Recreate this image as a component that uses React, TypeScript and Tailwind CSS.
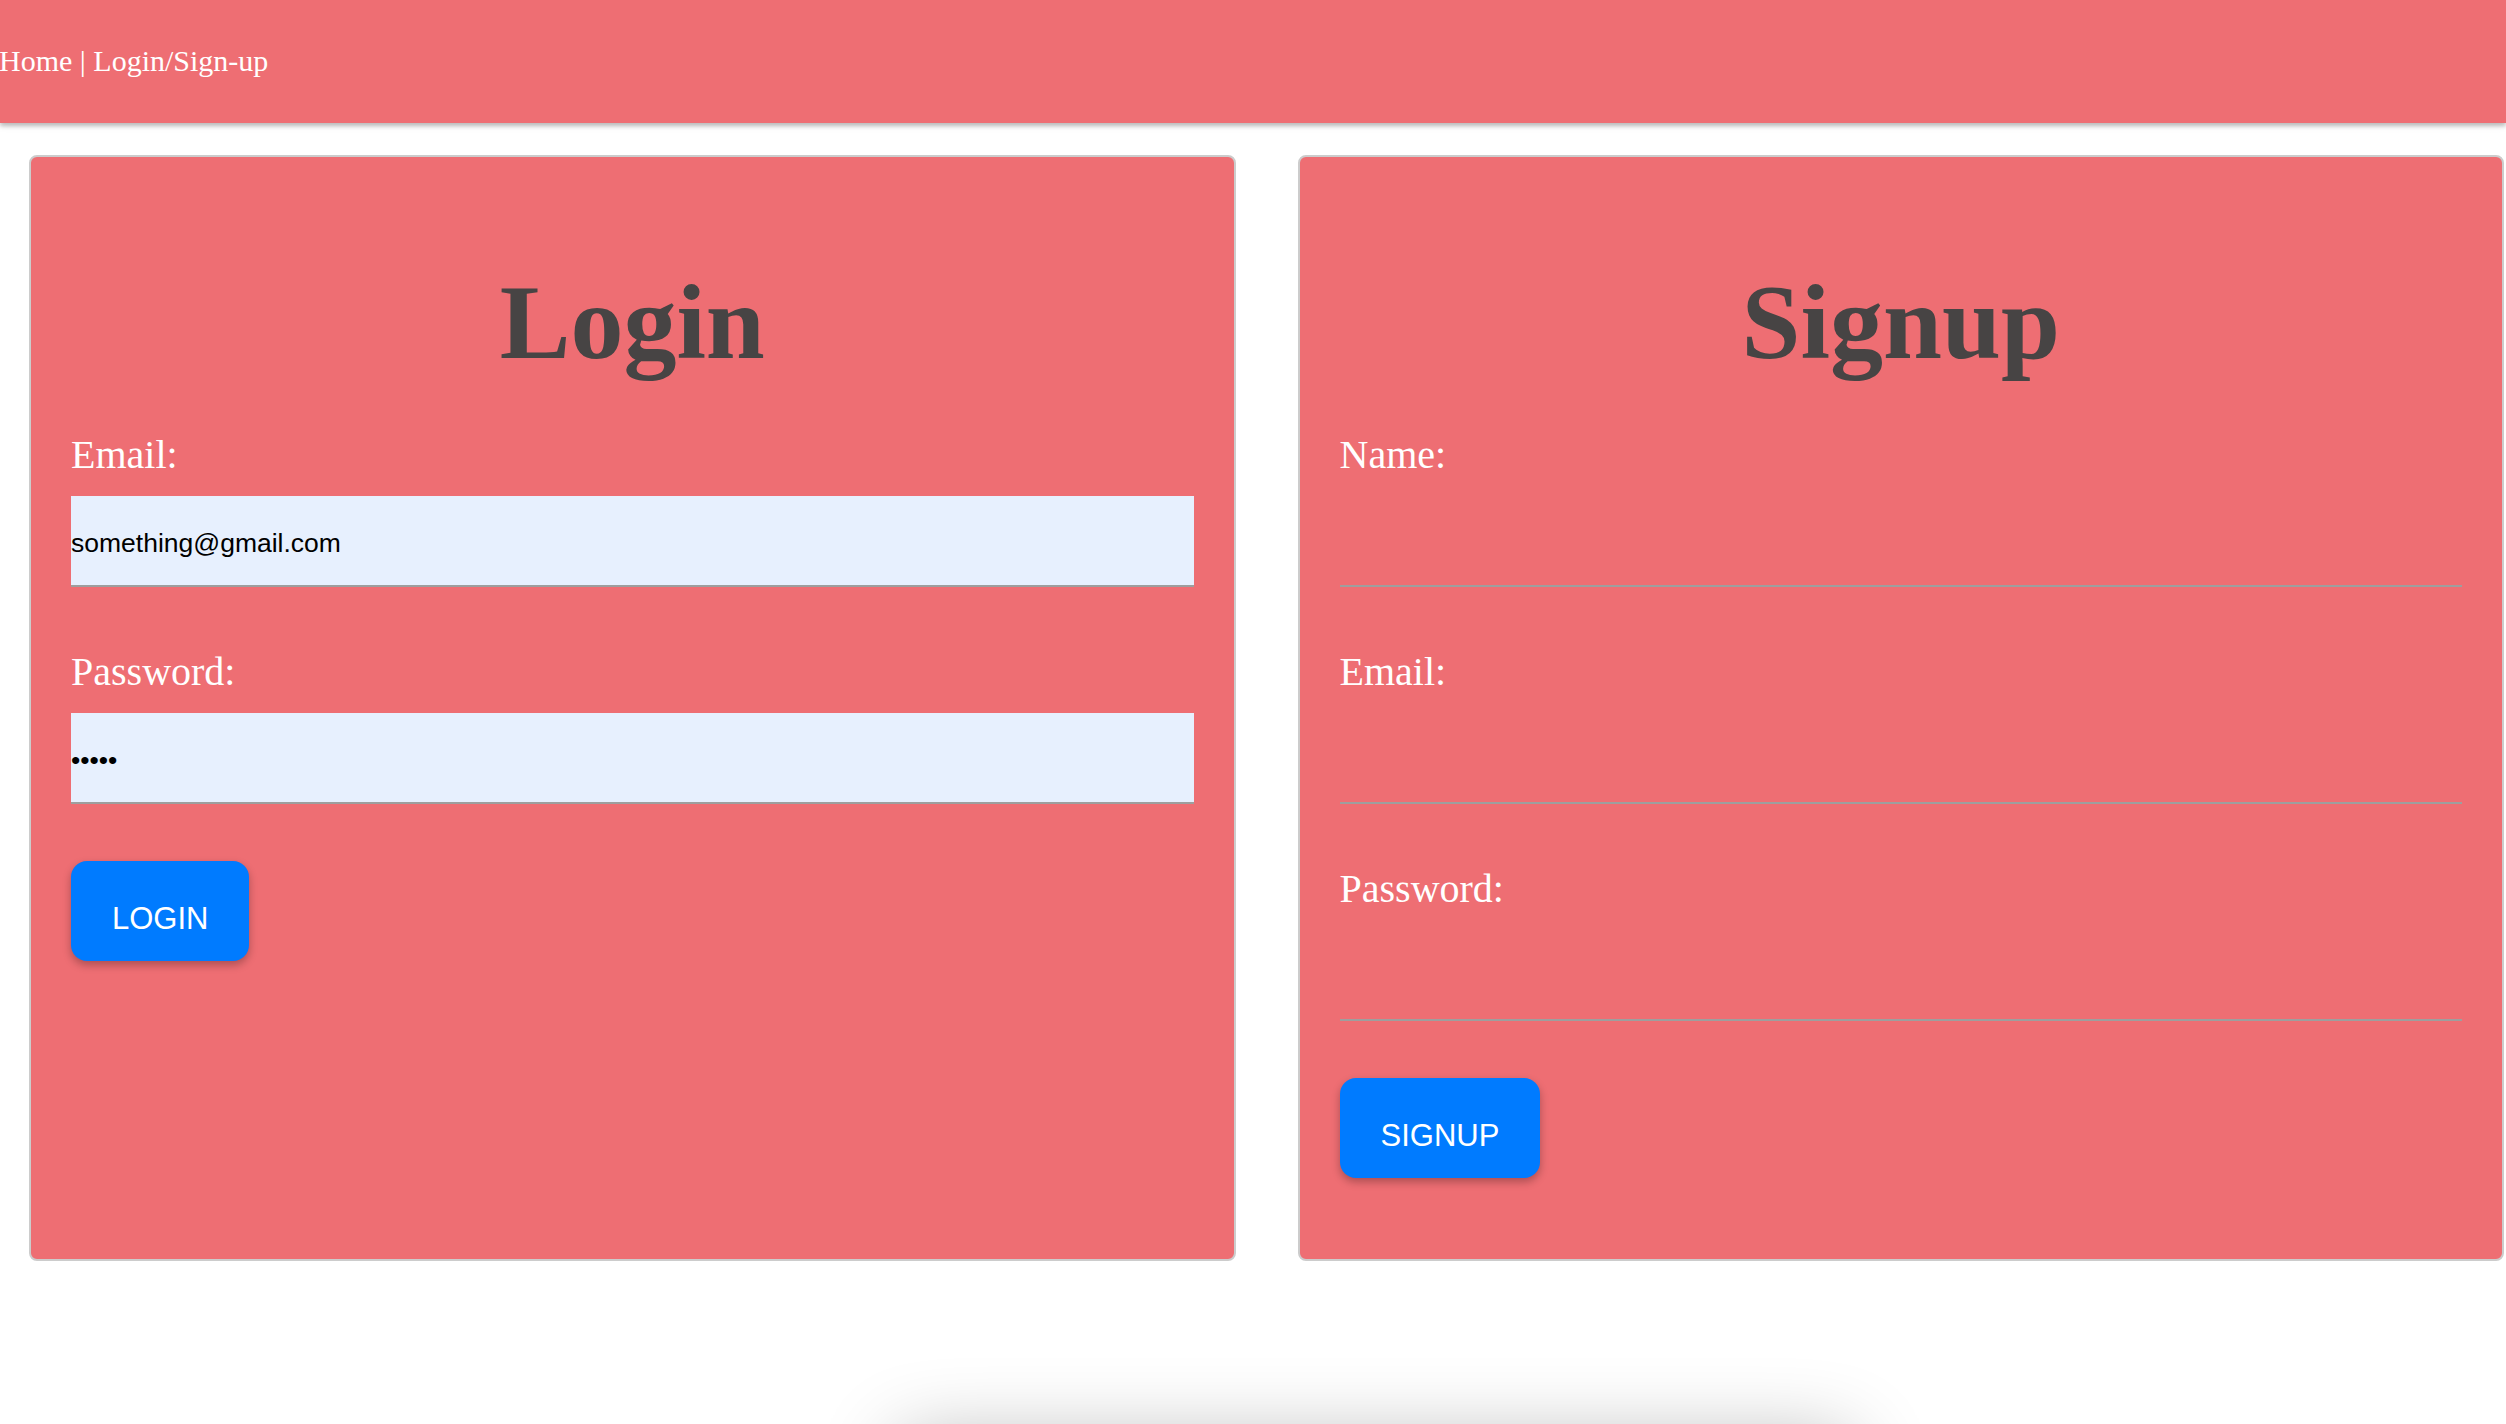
const serif = "font-['Liberation_Serif','Times_New_Roman',serif]";
const sans = "font-['Liberation_Sans',Arial,sans-serif]";

const Field = ({
	label,
	type,
	value,
	filled,
	first,
}: {
	label: string;
	type: string;
	value: string;
	filled?: boolean;
	first?: boolean;
}) => {
	return (
		<div className={first ? "mt-[49px] flex flex-col" : "mt-[62px] flex flex-col"}>
			<label className={`${serif} text-[40px] leading-[46px] text-white`}>
				{label}
			</label>
			<input
				type={type}
				readOnly
				defaultValue={value}
				className={`${sans} mt-[18px] h-[91px] w-full border-b-2 border-[#9e9e9e] pt-[6px] text-[26.5px] text-black outline-none ${
					filled ? "bg-[#e7f0fe]" : "bg-transparent"
				}`}
			/>
		</div>
	);
};

const Card = ({
	title,
	button,
	children,
}: {
	title: string;
	button: string;
	children: React.ReactNode;
}) => {
	return (
		<div className="flex flex-col rounded-[8px] border-2 border-[#cccccc] bg-[#ee6e73] px-[40px] pt-[106px] pb-[81px]">
			<h1
				className={`${serif} text-center text-[106px] font-bold leading-[120px] text-[#474444]`}
			>
				{title}
			</h1>
			{children}
			<div className="mt-[57px]">
				<button
					type="button"
					className={`${sans} h-[100px] rounded-[16px] bg-[#007bff] px-[41px] pt-[16px] text-[31px] text-white shadow-[0_4px_8px_rgba(0,0,0,0.28)]`}
				>
					{button}
				</button>
			</div>
		</div>
	);
};

export default function App() {
	return (
		<div className="min-h-screen w-full overflow-hidden bg-white">
			<nav className="relative z-10 flex h-[123px] items-center bg-[#ee6e73] pb-[3px] shadow-[0_3px_4px_rgba(0,0,0,0.2),0_2px_8px_rgba(0,0,0,0.12)]">
				<span className={`${serif} -ml-[1px] text-[30px] text-white`}>
					Home | Login/Sign-up
				</span>
			</nav>

			<div className="mt-[32px] grid grid-cols-2 gap-[62px] pl-[29px] pr-[2px]">
				<Card title="Login" button="LOGIN">
					<Field
						first
						filled
						label="Email:"
						type="email"
						value="something@gmail.com"
					/>
					<Field filled label="Password:" type="password" value="12345" />
				</Card>
				<Card title="Signup" button="SIGNUP">
					<Field first label="Name:" type="text" value="" />
					<Field label="Email:" type="email" value="" />
					<Field label="Password:" type="password" value="" />
				</Card>
			</div>

			<div className="mt-[180px] ml-[900px] h-[120px] w-[950px] shadow-[0_0_80px_rgba(0,0,0,0.3)]" />
		</div>
	);
}
